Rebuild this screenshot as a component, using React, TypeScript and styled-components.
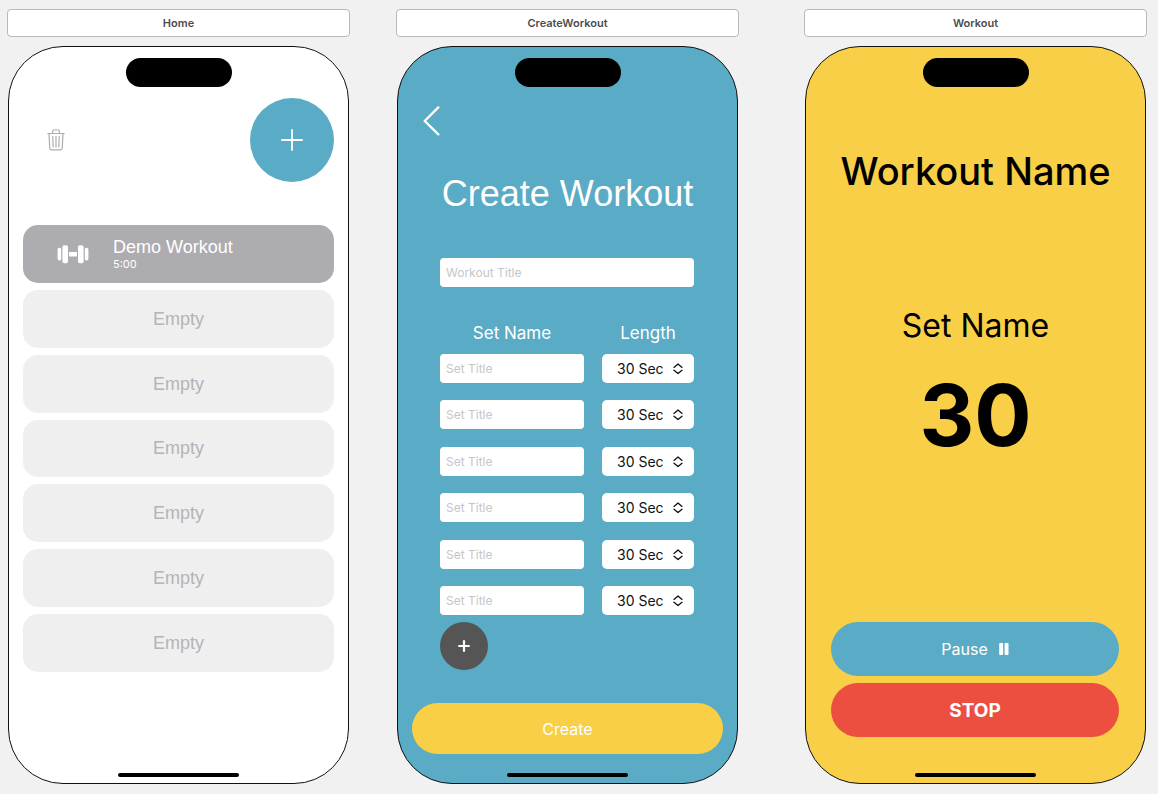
import React from "react";
import styled, { createGlobalStyle } from "styled-components";

const color = {
  canvas: "#f1f1f1",
  blue: "#5aabc5",
  yellow: "#f8cf46",
  red: "#ec4e3f",
  slate: "#adacb1",
  empty: "#efefef",
  emptyText: "#b4b4b6",
  dark: "#555555",
};

const grotesk = `"Liberation Sans", Arial, sans-serif`;
const system = `Inter, "Liberation Sans", sans-serif`;

const GlobalStyle = createGlobalStyle`
  *, *::before, *::after { box-sizing: border-box; }
  body { margin: 0; background: ${color.canvas}; font-family: ${system}; }
  button, input, select { font: inherit; margin: 0; border: 0; }
  button { cursor: pointer; padding: 0; }
  h1, h2, p, ul { margin: 0; padding: 0; }
  svg { display: block; }
`;

const Board = styled.main`
  display: flex;
  gap: 46px;
  min-height: 100vh;
  padding: 9px 11px 10px 7px;
`;

const Artboard = styled.section<{ $lead?: number }>`
  display: flex;
  flex: 1 1 0;
  flex-direction: column;
  gap: 9px;
  min-width: 0;
  margin-left: ${(p) => p.$lead ?? 0}px;
`;

const ArtboardLabel = styled.h2`
  height: 28px;
  border: 1px solid #b9b9b9;
  border-radius: 4px;
  background: #fff;
  color: #4c4c4c;
  font-size: 11px;
  font-weight: 600;
  line-height: 26px;
  text-align: center;
`;

const Phone = styled.div<{ $fill: string }>`
  display: flex;
  flex: 1;
  flex-direction: column;
  margin: 0 1px;
  padding: 11px 14px 6px;
  border: 1px solid #111;
  border-radius: 55px;
  background: ${(p) => p.$fill};
`;

const Island = styled.div`
  align-self: center;
  width: 106px;
  height: 29px;
  border-radius: 15px;
  background: #000;
`;

const Screen = styled.div`
  display: flex;
  flex: 1;
  flex-direction: column;
`;

const HomeIndicator = styled.div`
  align-self: center;
  width: 121px;
  height: 4px;
  border-radius: 2px;
  background: #000;
`;

const HomeBar = styled.header`
  display: flex;
  align-items: center;
  justify-content: space-between;
  margin: 11px 0 43px;
  padding-left: 24px;
`;

const IconButton = styled.button`
  background: none;
`;

const RoundButton = styled.button<{ $size: number; $fill: string }>`
  display: grid;
  place-items: center;
  width: ${(p) => p.$size}px;
  height: ${(p) => p.$size}px;
  border-radius: 50%;
  background: ${(p) => p.$fill};
`;

const WorkoutList = styled.ul`
  display: grid;
  grid-auto-rows: 1fr;
  gap: 7px;
  min-height: 447px;
  list-style: none;
  font-family: ${grotesk};
  font-size: 18px;
  line-height: 20px;
`;

const EmptySlot = styled.li`
  display: grid;
  place-items: center;
  border-radius: 15px;
  background: ${color.empty};
  color: ${color.emptyText};
`;

const WorkoutItem = styled.li`
  display: flex;
  align-items: center;
  gap: 24px;
  padding-left: 34px;
  border-radius: 15px;
  background: ${color.slate};
  color: #fff;
`;

const Duration = styled.p`
  font-family: ${system};
  font-size: 11px;
  line-height: 14px;
`;

const BackRow = styled.div`
  margin: 19px 0 0 11px;
`;

const CreateTitle = styled.h1`
  margin-top: 33px;
  color: #fff;
  font-family: ${grotesk};
  font-size: 36px;
  font-weight: 400;
  line-height: 42px;
  text-align: center;
  white-space: nowrap;
`;

const Form = styled.form`
  display: flex;
  flex: 1;
  flex-direction: column;
  padding-top: 43px;
`;

const Fields = styled.div`
  padding: 0 29px 0 28px;
`;

const TextField = styled.input`
  display: block;
  width: 100%;
  min-width: 0;
  height: 29px;
  padding: 0 6px;
  border-radius: 4px;
  background: #fff;
  font-size: 12px;
  &::placeholder { color: #c6c6c8; opacity: 1; }
`;

const SetTable = styled.div`
  display: grid;
  gap: 10px;
  margin-top: 35px;
`;

const SetColumns = styled.div`
  display: grid;
  grid-template-columns: minmax(0, 1fr) 92px;
  column-gap: 18px;
`;

const ColumnTitle = styled.span`
  color: #fff;
  font-size: 17px;
  line-height: 22px;
  text-align: center;
`;

const SetRows = styled.div`
  display: grid;
  align-content: space-between;
  min-height: 261px;
`;

const SelectBox = styled.div`
  position: relative;
`;

const LengthSelect = styled.select`
  appearance: none;
  width: 100%;
  height: 29px;
  padding: 0 0 0 15px;
  border-radius: 5px;
  background: #fff;
  color: #111;
  font-size: 14px;
`;

const Chevrons = styled.svg`
  position: absolute;
  top: 9px;
  right: 11px;
  pointer-events: none;
`;

const AddSet = styled(RoundButton)`
  margin-top: 7px;
`;

const Pill = styled.button<{ $fill: string; $height: number }>`
  display: flex;
  align-items: center;
  justify-content: center;
  gap: 11px;
  width: 100%;
  height: ${(p) => p.$height}px;
  border-radius: 27px;
  background: ${(p) => p.$fill};
  color: #fff;
  font-size: 16px;
`;

const CreateAction = styled.div`
  margin: auto 0 19px;
`;

const WorkoutTitle = styled.h1`
  margin-top: 60px;
  color: #000;
  font-size: 38px;
  font-weight: 500;
  line-height: 48px;
  text-align: center;
  white-space: nowrap;
`;

const SetTitle = styled.h2`
  margin-top: 111px;
  color: #000;
  font-size: 32px;
  font-weight: 400;
  line-height: 40px;
  text-align: center;
`;

const Countdown = styled.p`
  margin-top: 20px;
  color: #000;
  font-size: 85px;
  font-weight: 700;
  line-height: 100px;
  text-align: center;
`;

const WorkoutActions = styled.div`
  display: grid;
  gap: 7px;
  margin: auto 12px 36px 11px;
`;

const StopLabel = styled.strong`
  font-size: 19px;
  font-weight: 700;
`;

function TrashIcon() {
  return (
    <svg width="18" height="22" viewBox="0 0 18 22" fill="none" stroke="#adadaf" strokeWidth="1.2" strokeLinecap="round" strokeLinejoin="round">
      <path d="M0.8 4.5H17.2" />
      <path d="M5.6 4.4V2.5Q5.6 1 7.1 1H10.9Q12.4 1 12.4 2.5V4.4" />
      <path d="M2 4.6L2.8 19.3Q2.9 20.9 4.5 20.9H13.5Q15.1 20.9 15.2 19.3L16 4.6" />
      <path d="M5.8 7.4L6.1 18M9 7.4V18M12.2 7.4L11.9 18" />
    </svg>
  );
}

function PlusIcon({ size, weight }: { size: number; weight: number }) {
  const mid = size / 2;
  return (
    <svg width={size} height={size} viewBox={`0 0 ${size} ${size}`} stroke="#fff" strokeWidth={weight} strokeLinecap="round">
      <path d={`M${mid} ${weight / 2}V${size - weight / 2}M${weight / 2} ${mid}H${size - weight / 2}`} />
    </svg>
  );
}

function DumbbellIcon() {
  return (
    <svg width="32" height="20" viewBox="0 0 32 20" fill="#fff">
      <rect x="0.6" y="3.8" width="3.6" height="12.6" rx="1.6" />
      <rect x="5.4" y="1.2" width="5.6" height="18" rx="1.9" />
      <rect x="12" y="8" width="8" height="4.4" rx="0.6" />
      <rect x="21" y="1.2" width="5.6" height="18" rx="1.9" />
      <rect x="27.8" y="3.8" width="3.6" height="12.6" rx="1.6" />
    </svg>
  );
}

function BackIcon() {
  return (
    <svg width="18" height="30" viewBox="0 0 18 30" fill="none" stroke="#fff" strokeWidth="2.4" strokeLinecap="round" strokeLinejoin="round">
      <path d="M15.3 1.4L1.7 15L15.3 28.3" />
    </svg>
  );
}

function PauseIcon() {
  return (
    <svg width="10" height="12" viewBox="0 0 10 12" fill="#fff">
      <rect x="0.2" y="0" width="3.9" height="12" rx="0.8" />
      <rect x="5.6" y="0" width="3.9" height="12" rx="0.8" />
    </svg>
  );
}

const SLOTS = 6;
const SETS = [1, 2, 3, 4, 5, 6];

function HomeScreen() {
  return (
    <Screen>
      <HomeBar>
        <IconButton type="button" aria-label="Delete workouts"><TrashIcon /></IconButton>
        <RoundButton type="button" aria-label="New workout" $size={84} $fill={color.blue}>
          <PlusIcon size={22} weight={1.8} />
        </RoundButton>
      </HomeBar>
      <WorkoutList>
        <WorkoutItem>
          <DumbbellIcon />
          <div>
            <p>Demo Workout</p>
            <Duration>5:00</Duration>
          </div>
        </WorkoutItem>
        {Array.from({ length: SLOTS }, (_, i) => (
          <EmptySlot key={i}>Empty</EmptySlot>
        ))}
      </WorkoutList>
    </Screen>
  );
}

function CreateWorkoutScreen() {
  return (
    <Screen>
      <BackRow>
        <IconButton type="button" aria-label="Back"><BackIcon /></IconButton>
      </BackRow>
      <CreateTitle>Create Workout</CreateTitle>
      <Form onSubmit={(e) => e.preventDefault()}>
        <Fields>
          <TextField type="text" placeholder="Workout Title" aria-label="Workout Title" />
          <SetTable>
            <SetColumns>
              <ColumnTitle id="set-name">Set Name</ColumnTitle>
              <ColumnTitle id="set-length">Length</ColumnTitle>
            </SetColumns>
            <SetRows>
              {SETS.map((n) => (
                <SetColumns key={n}>
                  <TextField type="text" placeholder="Set Title" aria-labelledby="set-name" />
                  <SelectBox>
                    <LengthSelect aria-labelledby="set-length" defaultValue="30">
                      <option value="30">30 Sec</option>
                    </LengthSelect>
                    <Chevrons width="10" height="12" viewBox="0 0 10 12" fill="none" stroke="#111" strokeWidth="1.3" strokeLinecap="round" strokeLinejoin="round">
                      <path d="M1 4.4L5 1L9 4.4M1 7.2L5 10.6L9 7.2" />
                    </Chevrons>
                  </SelectBox>
                </SetColumns>
              ))}
            </SetRows>
          </SetTable>
          <AddSet type="button" aria-label="Add set" $size={48} $fill={color.dark}>
            <PlusIcon size={12} weight={2.2} />
          </AddSet>
        </Fields>
        <CreateAction>
          <Pill type="submit" $fill={color.yellow} $height={51}>Create</Pill>
        </CreateAction>
      </Form>
    </Screen>
  );
}

function WorkoutScreen() {
  return (
    <Screen>
      <WorkoutTitle>Workout Name</WorkoutTitle>
      <SetTitle>Set Name</SetTitle>
      <Countdown>30</Countdown>
      <WorkoutActions>
        <Pill type="button" $fill={color.blue} $height={54}>
          Pause
          <PauseIcon />
        </Pill>
        <Pill type="button" $fill={color.red} $height={54}>
          <StopLabel>STOP</StopLabel>
        </Pill>
      </WorkoutActions>
    </Screen>
  );
}

function Frame(props: { name: string; fill: string; lead?: number; children: React.ReactNode }) {
  return (
    <Artboard $lead={props.lead}>
      <ArtboardLabel>{props.name}</ArtboardLabel>
      <Phone $fill={props.fill}>
        <Island />
        {props.children}
        <HomeIndicator />
      </Phone>
    </Artboard>
  );
}

export default function App() {
  return (
    <>
      <GlobalStyle />
      <Board>
        <Frame name="Home" fill="#fff"><HomeScreen /></Frame>
        <Frame name="CreateWorkout" fill={color.blue}><CreateWorkoutScreen /></Frame>
        <Frame name="Workout" fill={color.yellow} lead={19}><WorkoutScreen /></Frame>
      </Board>
    </>
  );
}
